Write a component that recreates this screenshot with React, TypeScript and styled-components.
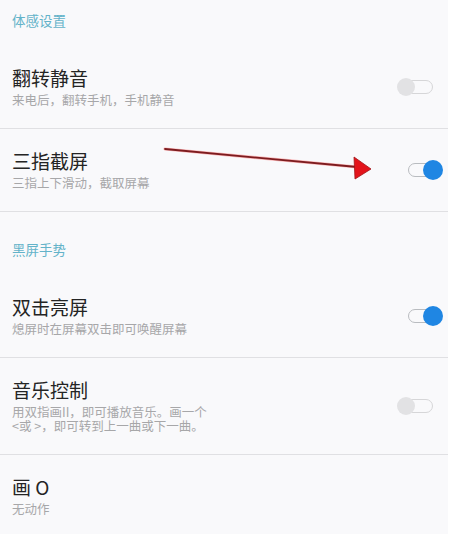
import styled, { createGlobalStyle } from "styled-components";

const GlobalStyle = createGlobalStyle`
  html, body {
    margin: 0;
    padding: 0;
    background: #ffffff;
  }
  body {
    font-family: "Noto Sans CJK SC", "Noto Sans", sans-serif;
  }
`;

type Item = {
    title: string;
    desc: string;
    toggle?: boolean;
};

const gestureItems: Item[] = [
    { title: "翻转静音", desc: "来电后，翻转手机，手机静音", toggle: false },
    { title: "三指截屏", desc: "三指上下滑动，截取屏幕", toggle: true },
];

const screenOffItems: Item[] = [
    { title: "双击亮屏", desc: "熄屏时在屏幕双击即可唤醒屏幕", toggle: true },
    {
        title: "音乐控制",
        desc: "用双指画II，即可播放音乐。画一个\n<或 >，即可转到上一曲或下一曲。",
        toggle: false,
    },
    { title: "画 O", desc: "无动作" },
];

function Toggle({ on }: { on: boolean }) {
    return (
        <SwitchBox>
            <Track $on={on} />
            <Thumb $on={on} />
        </SwitchBox>
    );
}

function SettingRow({ item }: { item: Item }) {
    return (
        <Row>
            <TextCol>
                <Title>{item.title}</Title>
                <Desc>{item.desc}</Desc>
            </TextCol>
            {item.toggle !== undefined && <Toggle on={item.toggle} />}
        </Row>
    );
}

export default function App(): JSX.Element {
    return (
        <>
            <GlobalStyle />
            <Page>
                <Header $top={13}>体感设置</Header>
                {gestureItems.map((item) => (
                    <SettingRow key={item.title} item={item} />
                ))}
                <Header $top={30}>黑屏手势</Header>
                {screenOffItems.map((item) => (
                    <SettingRow key={item.title} item={item} />
                ))}
                {/* red annotation arrow drawn over the screenshot */}
                <Arrow width="458" height="200" viewBox="0 0 458 200">
                    <line x1="165" y1="149" x2="357" y2="167" stroke="#ff6b6b" strokeWidth="3.2" strokeLinecap="round" opacity="0.45" />
                    <line x1="165" y1="149" x2="357" y2="167" stroke="#7d1c1f" strokeWidth="1.8" strokeLinecap="round" />
                    <polygon points="354,157 371,169 355,179" fill="#e3141b" stroke="#a01418" strokeWidth="0.8" strokeLinejoin="round" />
                </Arrow>
            </Page>
        </>
    );
}

const Page = styled.div`
  position: relative;
  width: 448px;
  min-height: 534px;
  background: #f9f9fb;
  overflow: hidden;
`;

const Header = styled.div<{ $top: number }>`
  padding: ${(p) => p.$top}px 12px 19px;
  font-size: 13.5px;
  line-height: 14px;
  color: #63b3c9;
`;

const Row = styled.div`
  display: flex;
  align-items: center;
  justify-content: space-between;
  padding: 21px 3px 21px 12px;
  border-bottom: 1px solid #e0e0e3;
`;

const TextCol = styled.div`
  display: flex;
  flex-direction: column;
  gap: 4px;
`;

const Title = styled.div`
  font-size: 19px;
  line-height: 22px;
  color: #242424;
`;

const Desc = styled.div`
  font-size: 12.5px;
  line-height: 14px;
  color: #a7a7a9;
  white-space: pre-line;
`;

const SwitchBox = styled.div`
  position: relative;
  width: 48px;
  height: 20px;
  flex-shrink: 0;
`;

const Track = styled.div<{ $on: boolean }>`
  position: absolute;
  top: 3px;
  left: ${(p) => (p.$on ? 11 : 3)}px;
  width: 33px;
  height: 14px;
  box-sizing: border-box;
  border: 1.5px solid ${(p) => (p.$on ? "#b9bcc0" : "#d6d6d8")};
  border-radius: 7px;
`;

const Thumb = styled.div<{ $on: boolean }>`
  position: absolute;
  top: ${(p) => (p.$on ? 0 : 1)}px;
  left: ${(p) => (p.$on ? 26 : 0)}px;
  width: ${(p) => (p.$on ? 20 : 18)}px;
  height: ${(p) => (p.$on ? 20 : 18)}px;
  border-radius: 50%;
  background: ${(p) => (p.$on ? "#1f86e3" : "#e2e2e4")};
`;

const Arrow = styled.svg`
  position: absolute;
  left: 0;
  top: 0;
  pointer-events: none;
`;
